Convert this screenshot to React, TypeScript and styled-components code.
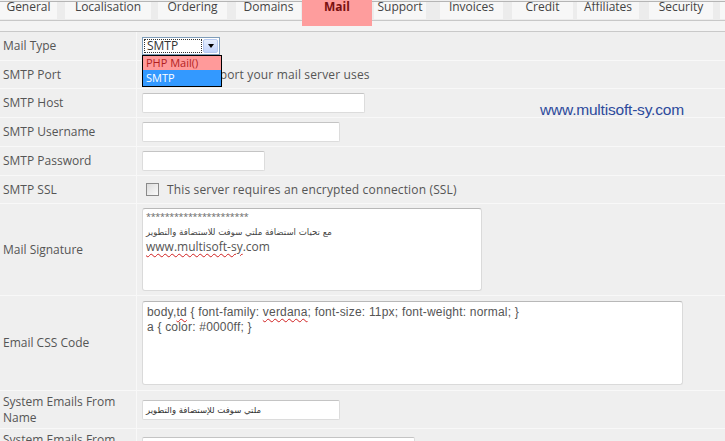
import styled, { createGlobalStyle } from 'styled-components';

const GlobalStyle = createGlobalStyle`
    html, body {
        margin: 0;
        padding: 0;
        background: #efefef;
        font-family: 'Open Sans', 'DejaVu Sans', sans-serif;
        overflow: hidden;
    }
`;

const Page = styled.div`
    position: relative;
    width: 725px;
    height: 441px;
    overflow: hidden;
    background: #efefef;
`;

const TabBar = styled.div`
    display: flex;
    align-items: flex-start;
    height: 18px;
    border-top: 1px solid #b5b5b5;
    margin-top: 1px;
    border-bottom: 1px solid #c8c8c8;
    background: #ececec;
`;

const Tab = styled.div<{ $w: number; $gap: number }>`
    flex: none;
    width: ${(p) => p.$w}px;
    margin-right: ${(p) => p.$gap}px;
    height: 17px;
    background: #f7f7f7;
    overflow: hidden;
    text-align: center;
    font-size: 12px;
    line-height: 12px;
    color: #444;

    span {
        display: block;
        margin-top: -1px;
    }
`;

const ActiveTab = styled(Tab)`
    height: 27px;
    margin-top: -3px;
    background: #fe9d9d;
    position: relative;
    z-index: 2;
    color: #7a1010;
    font-weight: bold;

    span {
        margin-top: 2px;
    }
`;

const Band = styled.div`
    height: 10px;
    background: #f4f4f4;
    border-bottom: 1px solid #c9c9c9;
`;

const Form = styled.div`
    display: flex;
    flex-direction: column;
`;

const Row = styled.div<{ $h: number }>`
    display: grid;
    grid-template-columns: 137px 1fr;
    box-sizing: border-box;
    height: ${(p) => p.$h}px;
    border-bottom: 1px solid #f8f8f8;
`;

const Label = styled.div`
    display: flex;
    align-items: center;
    padding: 0 8px 0 3px;
    font-size: 12px;
    line-height: 16px;
    color: #555;
    border-right: 1px solid #f8f8f8;
`;

const Field = styled.div<{ $top?: number }>`
    position: relative;
    display: flex;
    align-items: ${(p) => (p.$top !== undefined ? 'flex-start' : 'center')};
    padding-top: ${(p) => p.$top ?? 0}px;
    padding-left: 5px;
    font-size: 12px;
    color: #555;
`;

const TextInput = styled.div<{ $w: number }>`
    flex: none;
    width: ${(p) => p.$w}px;
    height: 20px;
    box-sizing: border-box;
    background: #fff;
    border: 1px solid #dcdcdc;
    border-top-color: #c4c4c4;
    border-radius: 2px;
    padding: 0 3px;
    font-family: 'DejaVu Sans', sans-serif;
    font-size: 8.5px;
    line-height: 18px;
    color: #333;
    text-align: left;
    unicode-bidi: plaintext;
`;

const Select = styled.div`
    position: relative;
    display: flex;
    width: 78px;
    height: 18px;
    box-sizing: border-box;
    border: 1px solid #7f9db9;
    background: #fff;
`;

const SelectValue = styled.div`
    flex: 1;
    margin: 1px;
    border: 1px dotted #333;
    font-size: 12px;
    line-height: 12px;
    padding-left: 2px;
    color: #333;
`;

const SelectArrow = styled.div`
    width: 15px;
    margin: 1px 1px 1px 0;
    border-radius: 2px;
    background: linear-gradient(#e6eefc, #c1d3fb);
    border: 1px solid #b7c9ef;
    box-sizing: border-box;
    display: flex;
    align-items: center;
    justify-content: center;

    &::after {
        content: '';
        border-left: 3px solid transparent;
        border-right: 3px solid transparent;
        border-top: 4px solid #000;
    }
`;

const DropList = styled.div`
    position: absolute;
    left: -1px;
    top: 17px;
    width: 78px;
    border: 1px solid #000;
    background: #fff;
    z-index: 5;
`;

const Option = styled.div<{ $kind: 'hover' | 'sel' }>`
    height: ${(p) => (p.$kind === 'hover' ? 14 : 16)}px;
    overflow: hidden;
    font-size: 11px;
    line-height: ${(p) => (p.$kind === 'hover' ? 13 : 15)}px;
    padding-left: 3px;
    background: ${(p) => (p.$kind === 'hover' ? '#ff9a9a' : '#3399ff')};
    color: ${(p) => (p.$kind === 'hover' ? '#b21f1f' : '#fff')};
`;

const Hint = styled.span`
    font-size: 12px;
    color: #555;
    letter-spacing: 0.15px;
`;

const CheckBox = styled.span`
    display: inline-block;
    width: 11px;
    height: 11px;
    border: 1px solid #8a8a8a;
    background: linear-gradient(135deg, #dcdcdc, #fbfbfb);
    margin: 0 8px 0 4px;
`;

const TextArea = styled.div<{ $w: number; $h: number }>`
    width: ${(p) => p.$w}px;
    height: ${(p) => p.$h}px;
    box-sizing: border-box;
    background: #fff;
    border: 1px solid #dadada;
    border-top-color: #b8b8b8;
    border-radius: 3px;
    padding: 3px 3px;
    color: #444;
`;

const Stars = styled.div`
    font-size: 9px;
    line-height: 10px;
    letter-spacing: -0.3px;
    color: #666;
`;

const Arabic = styled.div`
    font-family: 'DejaVu Sans', sans-serif;
    font-size: 8.6px;
    line-height: 14px;
    margin-top: 3px;
    text-align: left;
    unicode-bidi: plaintext;
    color: #444;
`;

const SigLink = styled.div`
    font-size: 12px;
    line-height: 15px;
    color: #555;
`;

const Squiggle = styled.span`
    text-decoration: underline wavy #d02020;
    text-decoration-thickness: 1px;
    text-underline-offset: 2px;
`;

const CodeLine = styled.div`
    font-family: 'Liberation Sans', Arial, sans-serif;
    font-size: 12px;
    letter-spacing: 0.2px;
    line-height: 15px;
    color: #555;
    margin-left: 1px;
`;

const Watermark = styled.div`
    position: absolute;
    left: 540px;
    top: 101px;
    font-family: 'Liberation Sans', Arial, sans-serif;
    font-size: 15.5px;
    letter-spacing: -0.2px;
    color: #2c4a9c;
    z-index: 3;
`;

const tabs = [
    { name: 'General', w: 57, gap: 8 },
    { name: 'Localisation', w: 86, gap: 7 },
    { name: 'Ordering', w: 69, gap: 9 },
    { name: 'Domains', w: 65, gap: 1 },
    { name: 'Mail', w: 70, gap: 2, active: true },
    { name: 'Support', w: 52, gap: 14 },
    { name: 'Invoices', w: 63, gap: 9 },
    { name: 'Credit', w: 61, gap: 4 },
    { name: 'Affiliates', w: 62, gap: 10 },
    { name: 'Security', w: 64, gap: 7 },
    { name: 'Other', w: 64, gap: 7 },
];

function App() {
    return (
        <Page>
            <GlobalStyle />
            <TabBar>
                {tabs.map((t) =>
                    t.active ? (
                        <ActiveTab key={t.name} $w={t.w} $gap={t.gap}>
                            <span>{t.name}</span>
                        </ActiveTab>
                    ) : (
                        <Tab key={t.name} $w={t.w} $gap={t.gap}>
                            <span>{t.name}</span>
                        </Tab>
                    ),
                )}
            </TabBar>
            <Band />
            <Form>
                <Row $h={29}>
                    <Label>Mail Type</Label>
                    <Field>
                        <Select>
                            <SelectValue>SMTP</SelectValue>
                            <SelectArrow />
                            <DropList>
                                <Option $kind="hover">PHP Mail()</Option>
                                <Option $kind="sel">SMTP</Option>
                            </DropList>
                        </Select>
                    </Field>
                </Row>
                <Row $h={28}>
                    <Label>SMTP Port</Label>
                    <Field>
                        <TextInput $w={50} />
                        <Hint>&nbsp;The port your mail server uses</Hint>
                    </Field>
                </Row>
                <Row $h={29}>
                    <Label>SMTP Host</Label>
                    <Field>
                        <TextInput $w={223} />
                    </Field>
                </Row>
                <Row $h={29}>
                    <Label>SMTP Username</Label>
                    <Field>
                        <TextInput $w={198} />
                    </Field>
                </Row>
                <Row $h={29}>
                    <Label>SMTP Password</Label>
                    <Field>
                        <TextInput $w={123} />
                    </Field>
                </Row>
                <Row $h={28}>
                    <Label>SMTP SSL</Label>
                    <Field>
                        <CheckBox />
                        <Hint>This server requires an encrypted connection (SSL)</Hint>
                    </Field>
                </Row>
                <Row $h={92}>
                    <Label>Mail Signature</Label>
                    <Field $top={4}>
                        <TextArea $w={340} $h={83}>
                            <Stars>**********************</Stars>
                            <Arabic>مع تحيات استضافة ملتي سوفت للاستضافة والتطوير</Arabic>
                            <SigLink>
                                <Squiggle>www.multisoft-sy</Squiggle>.com
                            </SigLink>
                        </TextArea>
                    </Field>
                </Row>
                <Row $h={95}>
                    <Label>Email CSS Code</Label>
                    <Field $top={5}>
                        <TextArea $w={541} $h={84}>
                            <CodeLine>
                                body,<Squiggle>td</Squiggle> {'{'} font-family:{' '}
                                <Squiggle>verdana</Squiggle>; font-size: 11px; font-weight: normal; {'}'}
                            </CodeLine>
                            <CodeLine>a {'{'} color: #0000ff; {'}'}</CodeLine>
                        </TextArea>
                    </Field>
                </Row>
                <Row $h={38}>
                    <Label>System Emails From Name</Label>
                    <Field>
                        <TextInput $w={198}>ملتي سوفت للإستضافة والتطوير</TextInput>
                    </Field>
                </Row>
                <Row $h={38}>
                    <Label>System Emails From Email</Label>
                    <Field $top={8}>
                        <TextInput $w={273} />
                    </Field>
                </Row>
            </Form>
            <Watermark>www.multisoft-sy.com</Watermark>
        </Page>
    );
}

export default App;
